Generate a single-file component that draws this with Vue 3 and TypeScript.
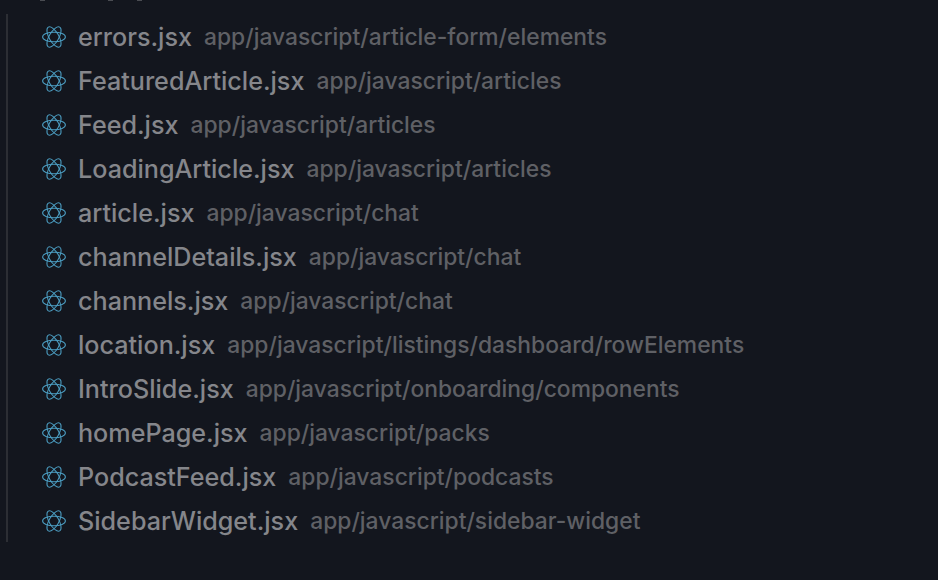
<script setup lang="ts">
interface FileRow {
  name: string
  path: string
}

const files: FileRow[] = [
  { name: 'errors.jsx', path: 'app/javascript/article-form/elements' },
  { name: 'FeaturedArticle.jsx', path: 'app/javascript/articles' },
  { name: 'Feed.jsx', path: 'app/javascript/articles' },
  { name: 'LoadingArticle.jsx', path: 'app/javascript/articles' },
  { name: 'article.jsx', path: 'app/javascript/chat' },
  { name: 'channelDetails.jsx', path: 'app/javascript/chat' },
  { name: 'channels.jsx', path: 'app/javascript/chat' },
  { name: 'location.jsx', path: 'app/javascript/listings/dashboard/rowElements' },
  { name: 'IntroSlide.jsx', path: 'app/javascript/onboarding/components' },
  { name: 'homePage.jsx', path: 'app/javascript/packs' },
  { name: 'PodcastFeed.jsx', path: 'app/javascript/podcasts' },
  { name: 'SidebarWidget.jsx', path: 'app/javascript/sidebar-widget' }
]
</script>

<template>
  <div class="panel">
    <div class="clipped-row">
      <i class="speck first"></i>
      <i class="speck second"></i>
      <i class="speck third"></i>
    </div>
    <ul class="file-list">
      <li v-for="file in files" :key="file.name" class="file-row">
        <svg class="react-icon" viewBox="0 0 24 24" fill="none" aria-hidden="true">
          <ellipse cx="12" cy="12" rx="11.4" ry="4.8" />
          <ellipse cx="12" cy="12" rx="11.4" ry="4.8" transform="rotate(60 12 12)" />
          <ellipse cx="12" cy="12" rx="11.4" ry="4.8" transform="rotate(120 12 12)" />
        </svg>
        <span class="file-name">{{ file.name }}</span>
        <span class="file-path">{{ file.path }}</span>
      </li>
    </ul>
  </div>
</template>

<style>
body {
  background: #13161e;
}
</style>

<style scoped>
.panel {
  width: 938px;
  height: 580px;
  box-sizing: border-box;
  padding: 0 0 0 6px;
  background: #13161e;
  overflow: hidden;
  font-family: Inter, "Liberation Sans", sans-serif;
}

.clipped-row {
  display: flex;
  height: 14px;
  padding-left: 34px;
}

.speck {
  display: block;
  width: 5px;
  height: 1px;
  background: #4a4c52;
}

.speck.second {
  margin-left: 63px;
}

.speck.third {
  margin-left: 24px;
}

.file-list {
  list-style: none;
  margin: 0;
  padding: 0 0 0 34px;
  border-left: 2px solid #2c2e34;
}

.file-row {
  display: flex;
  align-items: center;
  box-sizing: border-box;
  height: 44px;
  padding-top: 1px;
  white-space: nowrap;
}

.react-icon {
  width: 24px;
  height: 24px;
  flex: none;
  margin-right: 12px;
  stroke: #4b9cc0;
  stroke-width: 1.05;
}

.file-name {
  font-size: 25.15px;
  font-weight: 500;
  line-height: 44px;
  color: #85868b;
  margin-right: 12px;
}

.file-path {
  font-size: 22.85px;
  font-weight: 500;
  line-height: 44px;
  color: #5f6065;
}
</style>
